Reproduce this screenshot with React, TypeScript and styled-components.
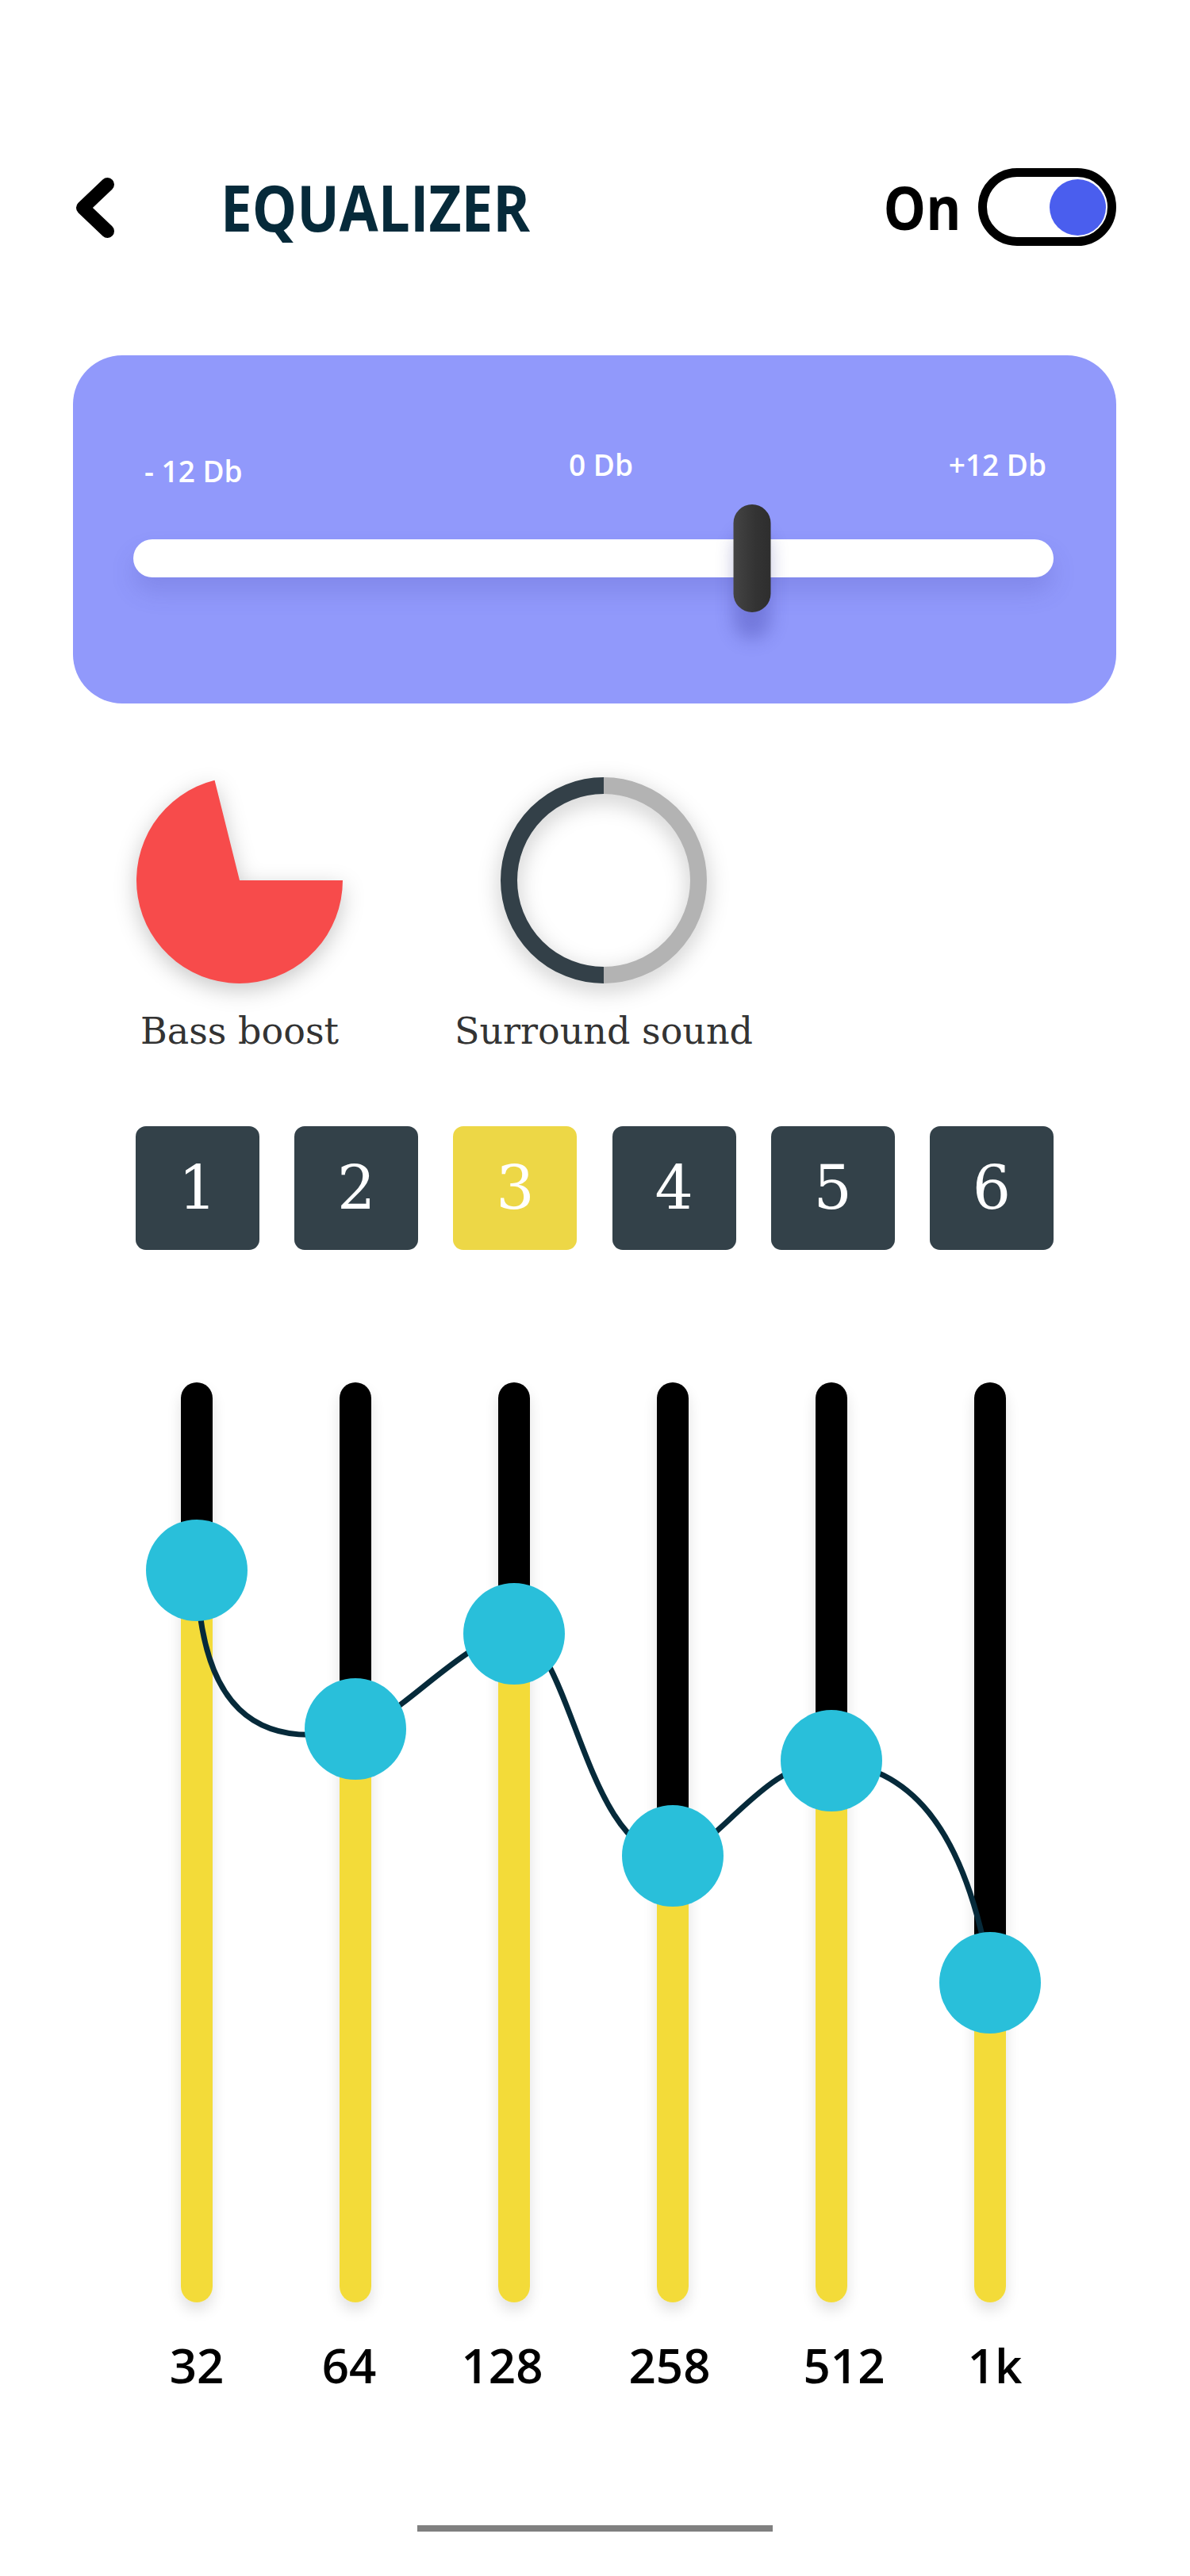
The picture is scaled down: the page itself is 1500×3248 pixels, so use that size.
import styled, { createGlobalStyle } from 'styled-components'

const bands = [
  { label: '32', level: 237, nudge: 0 },
  { label: '64', level: 437, nudge: -8 },
  { label: '128', level: 317, nudge: -15 },
  { label: '258', level: 597, nudge: -4 },
  { label: '512', level: 477, nudge: 16 },
  { label: '1k', level: 757, nudge: 6 },
]

const presets = [1, 2, 3, 4, 5, 6]

export default function App() {
  return (
    <Page>
      <GlobalStyle />
      <Header>
        <BackIcon viewBox="0 0 56 90">
          <polyline points="43.5,16.5 12.5,46 43.5,75.5" />
        </BackIcon>
        <Title>EQUALIZER</Title>
        <PowerGroup>
          <PowerLabel>On</PowerLabel>
          <Toggle>
            <ToggleKnob />
          </Toggle>
        </PowerGroup>
      </Header>

      <GainCard>
        <DbLabels>
          <DbLabel $drop>- 12 Db</DbLabel>
          <DbLabel>0 Db</DbLabel>
          <DbLabel>+12 Db</DbLabel>
        </DbLabels>
        <GainSlider>
          <GainTrack />
          <GainThumb style={{ left: `${0.672 * 100}%` }} />
        </GainSlider>
      </GainCard>

      <Effects>
        <Effect>
          <Dial viewBox="0 0 260 260">
            <path d="M130 130 L260 130 A130 130 0 1 1 98.55 3.86 Z" fill="#f74b4b" />
          </Dial>
          <EffectName>Bass boost</EffectName>
        </Effect>
        <Effect>
          <Dial viewBox="0 0 260 260">
            <path d="M130 10.5 A119.5 119.5 0 0 1 130 249.5" fill="none" stroke="#b3b3b3" strokeWidth="21" />
            <path d="M130 10.5 A119.5 119.5 0 0 0 130 249.5" fill="none" stroke="#334048" strokeWidth="21" />
          </Dial>
          <EffectName>Surround sound</EffectName>
        </Effect>
      </Effects>

      <Presets>
        {presets.map((n) => (
          <PresetButton key={n} $active={n === 3}>
            {n}
          </PresetButton>
        ))}
      </Presets>

      <Bands>
        <Curve viewBox="0 0 1200 1160">
          <path
            d="M100 237 C104 407 172 467 300 437 C342 437 442 317 500 317 C572 317 588 597 700 597 C752 597 812 477 900 477 C992 487 1067 547 1102 757"
            fill="none"
            stroke="#062a3a"
            strokeWidth="7"
          />
        </Curve>
        {bands.map((b) => (
          <Band key={b.label}>
            <BandTrack $level={b.level}>
              <BandKnob style={{ top: b.level }} />
            </BandTrack>
            <BandLabel $nudge={b.nudge}>{b.label}</BandLabel>
          </Band>
        ))}
      </Bands>

      <HomeBar />
    </Page>
  )
}

const GlobalStyle = createGlobalStyle`
  body {
    margin: 0;
    background: #fff;
    font-family: "Open Sans", "Noto Sans", sans-serif;
  }
`

const Page = styled.div`
  width: 1500px;
  min-height: 3248px;
  box-sizing: border-box;
  padding: 212px 93px 0 92px;
  display: flex;
  flex-direction: column;
`

const Header = styled.div`
  height: 98px;
  display: flex;
  align-items: center;
`

const BackIcon = styled.svg`
  width: 56px;
  height: 90px;
  fill: none;
  stroke: #000;
  stroke-width: 17;
  stroke-linecap: round;
  stroke-linejoin: round;
`

const Title = styled.h1`
  margin: 0 0 0 130px;
  font-family: "Open Sans", sans-serif;
  font-weight: 700;
  font-size: 80px;
  line-height: 1;
  color: #062a3a;
  transform: scaleX(0.887);
  transform-origin: left center;
`

const PowerGroup = styled.div`
  margin-left: auto;
  display: flex;
  align-items: center;
  gap: 22px;
`

const PowerLabel = styled.span`
  font-family: "Open Sans", sans-serif;
  font-weight: 700;
  font-size: 76px;
  line-height: 1;
  color: #000;
  transform: scaleX(0.887);
  transform-origin: right center;
`

const Toggle = styled.div`
  width: 174px;
  height: 98px;
  box-sizing: border-box;
  border: 11px solid #000;
  border-radius: 49px;
  padding: 2px;
  display: flex;
  align-items: center;
  justify-content: flex-end;
`

const ToggleKnob = styled.div`
  width: 71px;
  height: 71px;
  border-radius: 50%;
  background: #4a5eee;
  box-shadow: 0 0 0 1px #fff;
`

const GainCard = styled.div`
  margin-top: 138px;
  height: 439px;
  box-sizing: border-box;
  padding: 119px 79px 0 76px;
  border-radius: 62px;
  background: #9199fb;
`

const DbLabels = styled.div`
  display: grid;
  grid-template-columns: 1fr auto 1fr;
  padding: 0 9px 0 14px;
  height: 37px;
`

const DbLabel = styled.span<{ $drop?: boolean }>`
  font-family: "Open Sans", sans-serif;
  font-weight: 600;
  font-size: 37px;
  line-height: 1;
  color: #fff;
  white-space: nowrap;
  margin-top: ${(p) => (p.$drop ? '8px' : '0')};
  &:first-child {
    justify-self: start;
  }
  &:nth-child(2) {
    margin-left: 14px;
  }
  &:last-child {
    justify-self: end;
  }
`

const GainSlider = styled.div`
  position: relative;
  margin-top: 32px;
  height: 136px;
  display: flex;
  align-items: center;
`

const GainTrack = styled.div`
  width: 100%;
  height: 48px;
  border-radius: 24px;
  background: #fff;
  box-shadow: 0 18px 30px rgba(60, 60, 160, 0.18);
`

const GainThumb = styled.div`
  position: absolute;
  top: 0;
  width: 47px;
  height: 136px;
  transform: translateX(-50%);
  border-radius: 24px;
  background: linear-gradient(90deg, #444 0%, #333 60%, #2e2e2e 100%);
  box-shadow: 0 34px 22px rgba(40, 40, 140, 0.28);
`

const Effects = styled.div`
  margin-top: 93px;
  padding-left: 80px;
  display: grid;
  grid-template-columns: 260px 400px;
  column-gap: 129px;
`

const Effect = styled.div`
  display: flex;
  flex-direction: column;
  align-items: center;
`

const Dial = styled.svg`
  width: 260px;
  height: 260px;
  overflow: visible;
  filter: drop-shadow(0 8px 14px rgba(0, 0, 0, 0.22));
`

const EffectName = styled.span`
  margin-top: 37px;
  font-family: "DejaVu Serif", serif;
  font-size: 46px;
  line-height: 1;
  color: #333;
  white-space: nowrap;
`

const Presets = styled.div`
  margin: 97px 0 0 79px;
  width: 1157px;
  display: flex;
  justify-content: space-between;
`

const PresetButton = styled.button<{ $active?: boolean }>`
  width: 156px;
  height: 156px;
  border: none;
  border-radius: 13px;
  padding: 0;
  display: flex;
  align-items: center;
  justify-content: center;
  background: ${(p) => (p.$active ? '#edd746' : '#334149')};
  color: #fff;
  font-family: "DejaVu Serif", serif;
  font-size: 76px;
  line-height: 1;
`

const Bands = styled.div`
  position: relative;
  margin: 167px 0 0 56px;
  width: 1200px;
  display: flex;
`

const Curve = styled.svg`
  position: absolute;
  top: 0;
  left: 0;
  width: 1200px;
  height: 1160px;
  z-index: 1;
  pointer-events: none;
`

const Band = styled.div`
  width: 200px;
  display: flex;
  flex-direction: column;
  align-items: center;
`

const BandTrack = styled.div<{ $level: number }>`
  position: relative;
  width: 40px;
  height: 1160px;
  border-radius: 20px;
  background: linear-gradient(
    180deg,
    #000 0,
    #000 ${(p) => p.$level}px,
    #f3db39 ${(p) => p.$level}px,
    #f3db39 100%
  );
  box-shadow: 0 10px 18px rgba(0, 0, 0, 0.12);
`

const BandKnob = styled.div`
  position: absolute;
  left: 50%;
  width: 128px;
  height: 128px;
  border-radius: 50%;
  background: #29bfda;
  transform: translate(-50%, -50%);
  z-index: 2;
`

const BandLabel = styled.span<{ $nudge: number }>`
  margin-top: 49px;
  transform: translateX(${(p) => p.$nudge}px);
  font-family: "Open Sans", sans-serif;
  font-weight: 600;
  font-size: 60px;
  line-height: 1;
  color: #000;
`

const HomeBar = styled.div`
  margin: 172px auto 0;
  width: 448px;
  height: 8px;
  background: #808080;
`
